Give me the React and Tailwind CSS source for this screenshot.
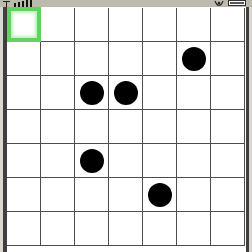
const stones = [
  [1, 5],
  [2, 2],
  [2, 3],
  [4, 2],
  [5, 4],
];

const hasStone = (r, c) => stones.some(([sr, sc]) => sr === r && sc === c);

const StatusBar = () => (
  <div className="h-[7px] bg-[#bdb9ad] flex items-end justify-between overflow-hidden">
    <svg width="32" height="7" viewBox="0 0 32 7" className="ml-[2px]">
      <rect x="1" y="1" width="7" height="1" fill="#222" />
      <rect x="4" y="1" width="1" height="6" fill="#222" />
      <rect x="12" y="3" width="2" height="4" fill="#111" />
      <rect x="16" y="2" width="2" height="5" fill="#111" />
      <rect x="20" y="1" width="2" height="6" fill="#111" />
      <rect x="24" y="0" width="2" height="7" fill="#111" />
      <rect x="28" y="0" width="2" height="7" fill="#111" />
    </svg>
    <svg width="34" height="7" viewBox="0 0 34 7" className="mr-[4px]">
      <path d="M1 1 Q3 6 5 5 Q7 6 9 1" stroke="#222" strokeWidth="1.2" fill="none" />
      <circle cx="5" cy="3" r="1.3" fill="#222" />
      <rect x="14.5" y="0.5" width="17" height="5" fill="#fff" stroke="#333" />
      <rect x="16" y="2" width="14" height="2" fill="#555" />
    </svg>
  </div>
);

const Board = () => (
  <div className="grid grid-cols-[repeat(7,34px)] grid-rows-[repeat(7,34px)]">
    {Array.from({ length: 49 }).map((_, i) => {
      const r = Math.floor(i / 7);
      const c = i % 7;
      return (
        <div
          key={i}
          className="relative flex items-center justify-center border-r border-b border-[#4d4d4d] bg-white"
        >
          {r === 0 && c === 0 && (
            <div className="absolute left-0 -top-[1px] w-[34px] h-[35px] border-[4px] border-[#5fd35f] shadow-[inset_0_0_3px_2px_#b9f2b9]" />
          )}
          {hasStone(r, c) && <div className="w-[24px] h-[24px] rounded-full bg-black" />}
        </div>
      );
    })}
  </div>
);

export default function App() {
  return (
    <div className="w-[252px] h-[252px] bg-white overflow-hidden flex flex-col">
      <StatusBar />
      <div className="flex flex-1">
        <div className="w-[3px] bg-[#d9d7d0]" />
        <div className="w-[4px] bg-[#3f3f3f]" />
        <div className="flex flex-col pt-[1px]">
          <Board />
        </div>
        <div className="w-px" />
        <div className="w-[3px] bg-[#3f3f3f]" />
        <div className="w-[3px] bg-[#d9d7d0]" />
      </div>
    </div>
  );
}
